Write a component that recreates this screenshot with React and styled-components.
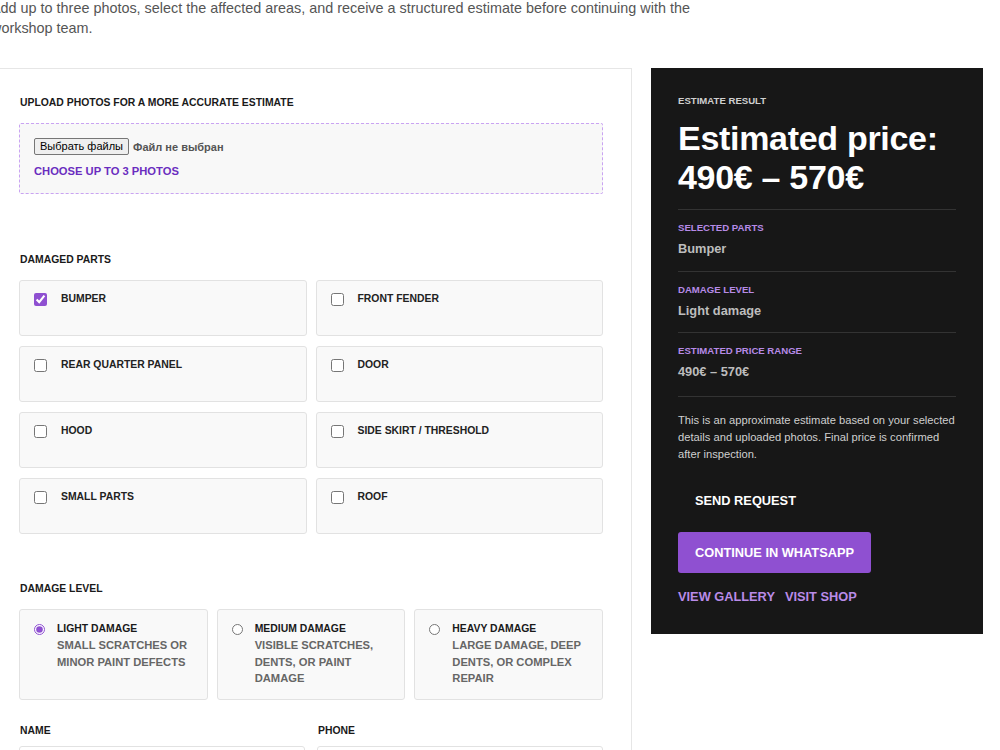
import styled, { createGlobalStyle } from "styled-components"

const GlobalStyle = createGlobalStyle`
  body {
    margin: 0;
    background: #fff;
    font-family: "Liberation Sans", Arial, Helvetica, sans-serif;
  }
  * { box-sizing: border-box; }
`

const parts = [
  { name: "Bumper", checked: true },
  { name: "Front fender" },
  { name: "Rear quarter panel" },
  { name: "Door" },
  { name: "Hood" },
  { name: "Side skirt / threshold" },
  { name: "Small parts" },
  { name: "Roof" },
]

const levels = [
  { title: "Light damage", text: "Small scratches or minor paint defects", checked: true },
  { title: "Medium damage", text: "Visible scratches, dents, or paint damage" },
  { title: "Heavy damage", text: "Large damage, deep dents, or complex repair" },
]

export default function App() {
  return (
    <>
      <GlobalStyle />
      <Page>
        <Intro>
          Add up to three photos, select the affected areas, and receive a structured estimate before continuing with the workshop team.
        </Intro>

        <Layout>
          <FormPanel>
            <FieldLabel>Upload photos for a more accurate estimate</FieldLabel>
            <UploadBox>
              <FileRow>
                <FileButton type="button">Выбрать файлы</FileButton>
                <FileStatus>Файл не выбран</FileStatus>
              </FileRow>
              <UploadHint>Choose up to 3 photos</UploadHint>
            </UploadBox>

            <FieldLabel $top="60px">Damaged parts</FieldLabel>
            <PartsGrid>
              {parts.map((p) => (
                <PartCard key={p.name}>
                  <Check type="checkbox" defaultChecked={p.checked} />
                  <PartName>{p.name}</PartName>
                </PartCard>
              ))}
            </PartsGrid>

            <FieldLabel $top="49px">Damage level</FieldLabel>
            <LevelGrid>
              {levels.map((l) => (
                <LevelCard key={l.title}>
                  <Radio type="radio" name="level" defaultChecked={l.checked} />
                  <LevelText>
                    <LevelTitle>{l.title}</LevelTitle>
                    <LevelDesc>{l.text}</LevelDesc>
                  </LevelText>
                </LevelCard>
              ))}
            </LevelGrid>

            <ContactGrid>
              <div>
                <FieldLabel>Name</FieldLabel>
                <TextInput type="text" />
              </div>
              <div>
                <FieldLabel>Phone</FieldLabel>
                <TextInput type="tel" />
              </div>
            </ContactGrid>
          </FormPanel>

          <ResultPanel>
            <Eyebrow>Estimate result</Eyebrow>
            <Price>Estimated price: 490€ – 570€</Price>

            <ResultSection>
              <ResultLabel>Selected parts</ResultLabel>
              <ResultValue>Bumper</ResultValue>
            </ResultSection>
            <ResultSection>
              <ResultLabel>Damage level</ResultLabel>
              <ResultValue>Light damage</ResultValue>
            </ResultSection>
            <ResultSection $last>
              <ResultLabel>Estimated price range</ResultLabel>
              <ResultValue>490€ – 570€</ResultValue>
            </ResultSection>

            <Note>
              This is an approximate estimate based on your selected details and uploaded photos. Final price is confirmed after inspection.
            </Note>

            <Actions>
              <SendButton type="button">Send request</SendButton>
              <WhatsButton type="button">Continue in WhatsApp</WhatsButton>
              <LinkRow>
                <PurpleLink href="#">View gallery</PurpleLink>
                <PurpleLink href="#">Visit shop</PurpleLink>
              </LinkRow>
            </Actions>
          </ResultPanel>
        </Layout>
      </Page>
    </>
  )
}

const Page = styled.div`
  margin-left: -9px;
`

const Intro = styled.p`
  margin: -2px 0 30px;
  max-width: 740px;
  font-size: 14.4px;
  line-height: 20px;
  color: #555;
`

const Layout = styled.div`
  display: grid;
  grid-template-columns: 641px 332px;
  gap: 19px;
  align-items: start;
`

const FormPanel = styled.section`
  border: 1px solid #e6e6e6;
  background: #fff;
  padding: 28px 28px 28px 27px;
`

const FieldLabel = styled.div`
  font-size: 10.4px;
  line-height: 12px;
  font-weight: 700;
  text-transform: uppercase;
  color: #1a1a1a;
  margin: ${(p) => p.$top || "0"} 1px 14px;
`

const UploadBox = styled.div`
  border: 1px dashed #c9a3f2;
  border-radius: 2px;
  background: #f8f8f8;
  padding: 14px 14px 15px;
`

const FileRow = styled.div`
  display: flex;
  align-items: center;
  gap: 4px;
`

const FileButton = styled.button`
  font-family: "Liberation Sans", Arial, sans-serif;
  font-size: 11px;
  line-height: 13px;
  padding: 1px 5px;
  color: #000;
  background: #efefef;
  border: 1px solid #767676;
  border-radius: 2px;
`

const FileStatus = styled.span`
  font-size: 11px;
  font-weight: 700;
  color: #555;
`

const UploadHint = styled.div`
  margin-top: 9px;
  font-size: 11.2px;
  line-height: 14px;
  font-weight: 700;
  text-transform: uppercase;
  color: #6a2dbf;
`

const PartsGrid = styled.div`
  display: grid;
  grid-template-columns: 1fr 1fr;
  gap: 10px 9px;
`

const PartCard = styled.label`
  display: flex;
  align-items: flex-start;
  gap: 14px;
  min-height: 56px;
  padding: 12px 14px;
  border: 1px solid #e2e2e2;
  border-radius: 3px;
  background: #f9f9f9;
`

const Check = styled.input`
  width: 13px;
  height: 13px;
  margin: 0;
  accent-color: #8f50d1;
`

const PartName = styled.span`
  font-size: 10.4px;
  line-height: 12px;
  font-weight: 700;
  text-transform: uppercase;
  color: #222;
`

const LevelGrid = styled.div`
  display: grid;
  grid-template-columns: repeat(3, 1fr);
  gap: 9px;
`

const LevelCard = styled.label`
  display: flex;
  align-items: flex-start;
  gap: 12px;
  padding: 13px 14px 12px;
  border: 1px solid #e2e2e2;
  border-radius: 3px;
  background: #f9f9f9;
`

const Radio = styled.input`
  width: 11px;
  height: 11px;
  margin: 1px 0 0;
  flex: none;
  accent-color: #8f50d1;
`

const LevelText = styled.div`
  display: flex;
  flex-direction: column;
  gap: 2px;
`

const LevelTitle = styled.span`
  font-size: 10.4px;
  line-height: 12px;
  font-weight: 700;
  text-transform: uppercase;
  color: #1a1a1a;
`

const LevelDesc = styled.span`
  font-size: 11.2px;
  line-height: 16.5px;
  font-weight: 700;
  text-transform: uppercase;
  color: #666;
`

const ContactGrid = styled.div`
  display: grid;
  grid-template-columns: 1fr 1fr;
  gap: 12px;
  margin-top: 25px;
`

const TextInput = styled.input`
  display: block;
  width: 100%;
  height: 42px;
  margin-top: -5px;
  border: 1px solid #e2e2e2;
  border-radius: 3px;
  background: #fff;
`

const ResultPanel = styled.aside`
  background: #171717;
  padding: 27px 27px 29px;
  color: #fff;
`

const Eyebrow = styled.div`
  font-size: 9.6px;
  line-height: 12px;
  font-weight: 700;
  text-transform: uppercase;
  color: #cfcfcf;
  margin-bottom: 12px;
`

const Price = styled.h2`
  margin: 0 0 12px;
  font-size: 34px;
  line-height: 39px;
  letter-spacing: -0.3px;
  font-weight: 700;
  color: #fff;
`

const ResultSection = styled.div`
  border-top: 1px solid #333;
  padding: 12px 0 ${(p) => (p.$last ? "16px" : "13.5px")};
`

const ResultLabel = styled.div`
  font-size: 9.6px;
  line-height: 12px;
  font-weight: 700;
  text-transform: uppercase;
  color: #b68ae6;
  margin-bottom: 6px;
`

const ResultValue = styled.div`
  font-size: 12.8px;
  line-height: 17px;
  font-weight: 700;
  color: #bdbdbd;
`

const Note = styled.p`
  margin: 0;
  padding-top: 15px;
  border-top: 1px solid #333;
  font-size: 11.2px;
  line-height: 17px;
  color: #cfcfcf;
`

const Actions = styled.div`
  display: flex;
  flex-direction: column;
  align-items: flex-start;
  margin-top: 18px;
`

const SendButton = styled.button`
  font-family: inherit;
  font-size: 12.8px;
  line-height: 16px;
  font-weight: 700;
  text-transform: uppercase;
  color: #fff;
  background: transparent;
  border: none;
  padding: 12px 17px;
`

const WhatsButton = styled.button`
  margin-top: 11px;
  font-family: inherit;
  font-size: 12.8px;
  line-height: 15px;
  font-weight: 700;
  text-transform: uppercase;
  color: #fff;
  background: #8f50d1;
  border: none;
  border-radius: 3px;
  padding: 13px 17px;
`

const LinkRow = styled.div`
  display: flex;
  gap: 10px;
  margin-top: 16px;
`

const PurpleLink = styled.a`
  font-size: 12.8px;
  line-height: 16px;
  font-weight: 700;
  text-transform: uppercase;
  text-decoration: none;
  color: #b98be8;
`
